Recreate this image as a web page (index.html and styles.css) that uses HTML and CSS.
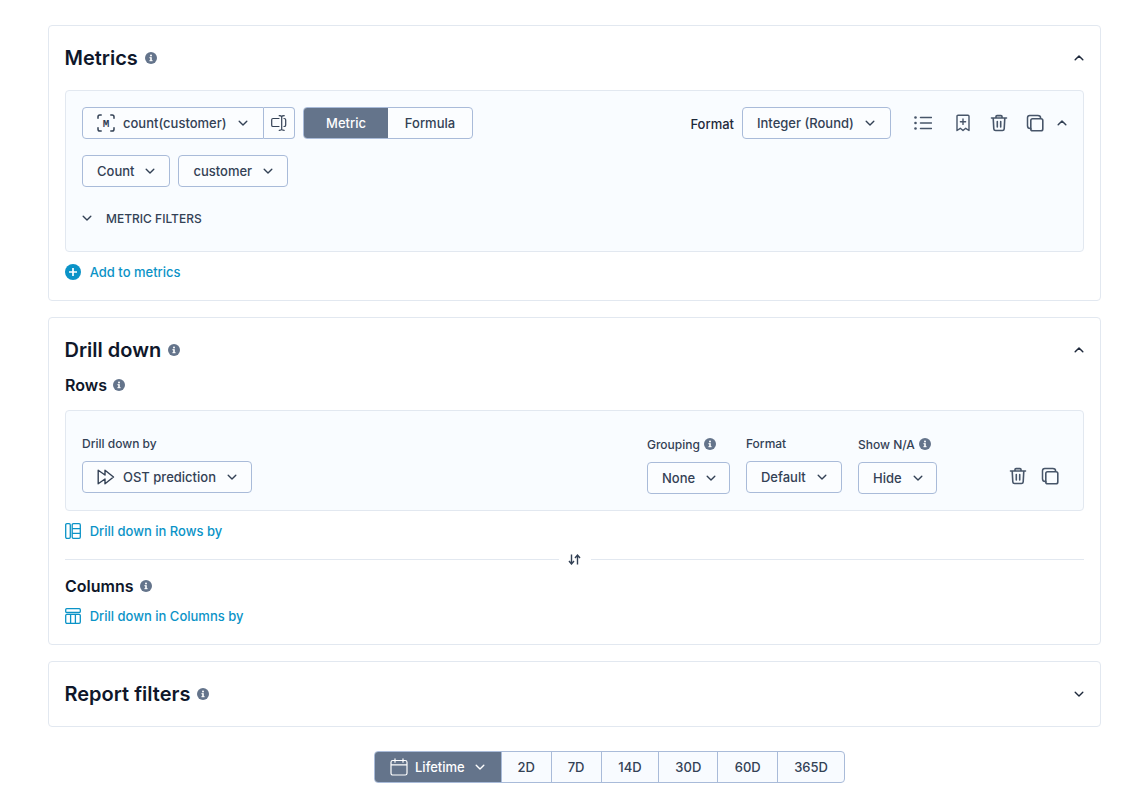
FILE: index.html
```html
<!DOCTYPE html>
<html lang="en">
<head>
    <meta charset="UTF-8">
    <title>Report builder</title>
    <link rel="stylesheet" href="styles.css">
</head>
<body>
    <svg class="sprite" width="0" height="0">
        <symbol id="info" viewBox="0 0 12 12">
            <circle cx="6" cy="6" r="6" fill="#64748b"/>
            <rect x="5.2" y="5.2" width="1.6" height="3.8" fill="#fff"/>
            <rect x="4.4" y="5.2" width="1.4" height="1" fill="#fff"/>
            <rect x="4.4" y="8.2" width="3.2" height="1" fill="#fff"/>
            <circle cx="6" cy="3.5" r="1" fill="#fff"/>
        </symbol>
        <symbol id="chev-down" viewBox="0 0 12 12">
            <path d="M2.2 4.3 6 8l3.8-3.7" fill="none" stroke="currentColor" stroke-width="1.4" stroke-linecap="round" stroke-linejoin="round"/>
        </symbol>
        <symbol id="chev-up" viewBox="0 0 12 12">
            <path d="M2.2 7.7 6 4l3.8 3.7" fill="none" stroke="currentColor" stroke-width="1.5" stroke-linecap="round" stroke-linejoin="round"/>
        </symbol>
        <symbol id="trash" viewBox="0 0 18 18">
            <path d="M1.5 4h15M6 4V2.6c0-.6.4-1 1-1h4c.6 0 1 .4 1 1V4M3.2 4l.6 10.8c.1 1 .8 1.7 1.8 1.7h6.8c1 0 1.7-.7 1.8-1.7L14.8 4M7.3 7.5v5.5M10.700 7.500v5.500" fill="none" stroke="currentColor" stroke-width="1.6" stroke-linecap="round" stroke-linejoin="round"/>
        </symbol>
        <symbol id="copy" viewBox="0 0 18 18">
            <rect x="4.8" y="4.8" width="12" height="12" rx="1.8" fill="none" stroke="currentColor" stroke-width="1.6"/>
            <path d="M4.8 14.6h-.5c-1.6 0-2.8-1.2-2.8-2.8V3.8c0-1.3 1-2.3 2.3-2.3h8c1.6 0 2.8 1 2.8 2.4" fill="none" stroke="currentColor" stroke-width="1.5" stroke-linecap="round"/>
        </symbol>
    </svg>

    <!-- Metrics -->
    <section class="card">
        <div class="card-head">
            <h2>Metrics</h2>
            <svg class="info"><use href="#info"/></svg>
            <svg class="chev card-toggle"><use href="#chev-up"/></svg>
        </div>
        <div class="panel metric-panel">
            <div class="row row-top">
                <div class="joined">
                    <button class="btn name-btn">
                        <svg class="ico-m" viewBox="0 0 18 18" width="18" height="18">
                            <path d="M1 4.200V2.800C1 1.800 1.800 1 2.800 1h1.400M13.800 1h1.400c1 0 1.800.8 1.800 1.800v1.400M17 13.800v1.400c0 1-.8 1.800-1.800 1.800h-1.400M4.200 17H2.800C1.800 17 1 16.200 1 15.200v-1.400" fill="none" stroke="currentColor" stroke-width="1.500" stroke-linecap="round"/>
                            <text x="9" y="12.800" class="ico-letter">M</text>
                        </svg>
                        count(customer)
                        <svg class="chev"><use href="#chev-down"/></svg>
                    </button>
                    <button class="btn rename-btn">
                        <svg viewBox="0 0 16 16" width="16" height="16">
                            <path d="M8 3.500H2c-.8 0-1.300.5-1.300 1.300v5.400c0 .8.5 1.300 1.300 1.300h6M13 3.500c.9 0 1.700.5 1.700 1.300v5.400c0 .8-.8 1.300-1.700 1.300M10.700 1.500v13M8.200.7c1.300 0 2.200.2 2.500.8.300-.6 1.200-.8 2.500-.8M8.200 15.300c1.300 0 2.200-.2 2.500-.8.300.6 1.200.8 2.500.8" fill="none" stroke="currentColor" stroke-width="1.200" stroke-linecap="round"/>
                        </svg>
                    </button>
                </div>
                <div class="segment type-switch">
                    <span class="seg active">Metric</span>
                    <span class="seg">Formula</span>
                </div>
                <div class="metric-tools">
                    <span class="format-label">Format</span>
                    <button class="btn format-btn">Integer (Round)<svg class="chev"><use href="#chev-down"/></svg></button>
                    <svg class="tool list-ico" viewBox="0 0 18 18">
                        <path d="M6.500 3.500h11M6.500 9h11M6.500 14.500h11" fill="none" stroke="currentColor" stroke-width="1.500" stroke-linecap="round"/>
                        <circle cx="1.500" cy="3.500" r="1.300" fill="currentColor"/>
                        <circle cx="1.500" cy="9" r="1.300" fill="currentColor"/>
                        <circle cx="1.500" cy="14.500" r="1.300" fill="currentColor"/>
                    </svg>
                    <svg class="tool mark-ico" viewBox="0 0 16 18">
                        <path d="M2 2.300c0-.6.4-1 1-1h10c.6 0 1 .4 1 1v14.200l-3.300-2.200L8 16.500l-2.700-2.200L2 16.500zM8 5v5.400M5.400 7.700h5.200" fill="none" stroke="currentColor" stroke-width="1.400" stroke-linecap="round" stroke-linejoin="round"/>
                    </svg>
                    <svg class="tool trash-ico"><use href="#trash"/></svg>
                    <svg class="tool copy-ico"><use href="#copy"/></svg>
                    <svg class="chev tools-toggle"><use href="#chev-up"/></svg>
                </div>
            </div>
            <div class="row row-aggr">
                <button class="btn">Count<svg class="chev"><use href="#chev-down"/></svg></button>
                <button class="btn">customer<svg class="chev"><use href="#chev-down"/></svg></button>
            </div>
            <div class="filters-toggle">
                <svg class="chev"><use href="#chev-down"/></svg>
                <span>METRIC FILTERS</span>
            </div>
        </div>
        <a class="add-link metric-add" href="#">
            <svg viewBox="0 0 16 16" width="16" height="16">
                <circle cx="8" cy="8" r="8" fill="currentColor"/>
                <path d="M8 4v8M4 8h8" stroke="#fff" stroke-width="1.700"/>
            </svg>
            Add to metrics
        </a>
    </section>

    <!-- Drill down -->
    <section class="card">
        <div class="card-head drill-head">
            <h2>Drill down</h2>
            <svg class="info"><use href="#info"/></svg>
            <svg class="chev card-toggle"><use href="#chev-up"/></svg>
        </div>
        <div class="sub-head rows-head">
            <h3>Rows</h3>
            <svg class="info"><use href="#info"/></svg>
        </div>
        <div class="panel drill-panel">
            <div class="field drill-by">
                <label>Drill down by</label>
                <button class="btn ost-btn">
                    <svg viewBox="0 0 18 18" width="18" height="18">
                        <path d="M1.200 2.200 8 7V2.200L16.500 9 8 15.800V11l-6.800 4.800z" fill="none" stroke="currentColor" stroke-width="1.400" stroke-linejoin="round"/>
                    </svg>
                    OST prediction
                    <svg class="chev"><use href="#chev-down"/></svg>
                </button>
            </div>
            <div class="field field-low">
                <label>Grouping <svg class="info info-sm"><use href="#info"/></svg></label>
                <button class="btn none-btn">None<svg class="chev"><use href="#chev-down"/></svg></button>
            </div>
            <div class="field">
                <label>Format</label>
                <button class="btn default-btn">Default<svg class="chev"><use href="#chev-down"/></svg></button>
            </div>
            <div class="field field-low">
                <label>Show N/A <svg class="info info-sm"><use href="#info"/></svg></label>
                <button class="btn hide-btn">Hide<svg class="chev"><use href="#chev-down"/></svg></button>
            </div>
            <div class="drill-tools">
                <svg class="tool trash-ico"><use href="#trash"/></svg>
                <svg class="tool copy-ico"><use href="#copy"/></svg>
            </div>
        </div>
        <a class="add-link rows-add" href="#">
            <svg viewBox="0 0 16 16" width="16" height="16">
                <rect x=".7" y=".7" width="4.600" height="14.600" rx="1.200" fill="none" stroke="currentColor" stroke-width="1.300"/>
                <rect x="7.200" y=".7" width="8.100" height="14.600" rx="1.200" fill="none" stroke="currentColor" stroke-width="1.300"/>
                <path d="M7.200 5.600h8M7.200 10.400h8" stroke="currentColor" stroke-width="1.300"/>
            </svg>
            Drill down in Rows by
        </a>
        <div class="divider">
            <svg viewBox="0.5 -0.5 14 12" width="14" height="12">
                <path d="M4 1v9M1.500 7.500 4 10.500l2.500-3M10 11V2M7.500 4.500 10 1.500l2.500 3" fill="none" stroke="#334155" stroke-width="1.400"/>
            </svg>
        </div>
        <div class="sub-head cols-head">
            <h3>Columns</h3>
            <svg class="info"><use href="#info"/></svg>
        </div>
        <a class="add-link cols-add" href="#">
            <svg viewBox="0 0 16 16" width="16" height="16">
                <rect x=".7" y=".7" width="14.600" height="3.800" rx="1" fill="none" stroke="currentColor" stroke-width="1.300"/>
                <rect x=".7" y="6.300" width="14.600" height="9" rx="1.200" fill="none" stroke="currentColor" stroke-width="1.300"/>
                <path d="M5.600 6.300v9M10.400 6.300v9" stroke="currentColor" stroke-width="1.300"/>
            </svg>
            Drill down in Columns by
        </a>
    </section>

    <!-- Report filters -->
    <section class="card card-closed">
        <div class="card-head">
            <h2>Report filters</h2>
            <svg class="info"><use href="#info"/></svg>
            <svg class="chev card-toggle"><use href="#chev-down"/></svg>
        </div>
    </section>

    <div class="segment range">
        <span class="seg active">
            <svg viewBox="0 0 18 18" width="18" height="18">
                <path d="M5 .8v3.400M13 .8v3.400M1 6.800h16M2.800 2.500h12.400c1 0 1.800.8 1.800 1.800v10.900c0 1-.8 1.800-1.800 1.800H2.800c-1 0-1.800-.8-1.800-1.800V4.300c0-1 .8-1.800 1.800-1.800z" fill="none" stroke="currentColor" stroke-width="1.200" stroke-linecap="round"/>
            </svg>
            Lifetime
            <svg class="chev"><use href="#chev-down"/></svg>
        </span>
        <span class="seg seg-2d">2D</span>
        <span class="seg seg-7d">7D</span>
        <span class="seg seg-14d">14D</span>
        <span class="seg seg-30d">30D</span>
        <span class="seg seg-60d">60D</span>
        <span class="seg seg-365d">365D</span>
    </div>
</body>
</html>
```

FILE: styles.css
```css
* {
    box-sizing: border-box;
}

body {
    margin: 0;
    padding: 25px 26px 22px 48px;
    background-color: #fff;
    color: #0f172a;
    font-family: Inter, "Liberation Sans", sans-serif;
}

.sprite {
    position: absolute;
}

.card {
    border: 1px solid #e2e8f0;
    border-radius: 4px;
    padding: 0 16px;
    margin-bottom: 16px;
    height: 276px;
}

.card:nth-of-type(2) {
    height: 328px;
}

.card-closed {
    height: 66px;
    margin-bottom: 24px;
}

.card-head {
    display: flex;
    align-items: center;
    height: 64px;
    padding-bottom: 1px;
}

.drill-head {
    height: 65px;
    padding-bottom: 2px;
}

h2 {
    margin: 0 0 0 -.5px;
    font-size: 20px;
    line-height: 24px;
    font-weight: 600;
}

h3 {
    margin: 0;
    font-size: 16px;
    line-height: 20px;
    font-weight: 600;
}

.info {
    width: 12px;
    height: 12px;
    margin-left: 7px;
    flex: none;
}

.sub-head .info {
    margin-left: 6px;
}

.info-sm {
    margin-left: 4px;
}

.chev {
    width: 12px;
    height: 12px;
    flex: none;
    color: #334155;
}

.card-toggle {
    margin-left: auto;
    margin-right: -1px;
    color: #1e293b;
}

.panel {
    border: 1px solid #e2e8f0;
    border-radius: 4px;
    background-color: #f9fcff;
    padding: 16px;
}

.metric-panel {
    height: 162px;
}

.row {
    display: flex;
    align-items: center;
}

.row-aggr {
    gap: 8px;
    margin-top: 16px;
}

.btn {
    display: inline-flex;
    align-items: center;
    height: 32px;
    padding: 0 13px 0 14px;
    gap: 10px;
    border: 1px solid #a9bbd9;
    border-radius: 4px;
    background-color: #fbfdff;
    color: #334155;
    font-family: inherit;
    font-size: 13px;
    font-weight: 500;
    white-space: nowrap;
}

.joined {
    display: flex;
    width: 213px;
}

.name-btn {
    width: 182px;
    padding: 0 14px;
    border-radius: 4px 0 0 4px;
    gap: 0;
}

.name-btn .ico-m {
    flex: none;
    margin-right: 8px;
}

.ico-letter {
    fill: currentColor;
    font-family: "Liberation Mono", monospace;
    font-size: 11px;
    font-weight: 700;
    text-anchor: middle;
}

.name-btn .chev {
    margin-left: 10px;
}

.rename-btn {
    width: 31px;
    padding: 0 0 0 7px;
    border-left: 0;
    border-radius: 0 4px 4px 0;
}

.ost-btn {
    gap: 8px;
}

.ost-btn .chev {
    margin-left: 2px;
}

.none-btn {
    width: 83px;
}

.default-btn {
    width: 96px;
}

.hide-btn {
    width: 79px;
}

.none-btn .chev,
.default-btn .chev,
.hide-btn .chev {
    margin-left: auto;
}

.segment {
    display: flex;
    border: 1px solid #a9bbd9;
    border-radius: 4px;
    background-color: #fbfdff;
    font-size: 13px;
    font-weight: 500;
    color: #334155;
    overflow: hidden;
}

.seg {
    display: flex;
    align-items: center;
    justify-content: center;
    height: 30px;
}

.seg.active {
    background-color: #64748b;
    color: #fff;
}

.type-switch {
    margin-left: 8px;
    width: 170px;
}

.type-switch .seg {
    width: 85px;
}

.metric-tools {
    display: flex;
    align-items: center;
    margin-left: auto;
}

.format-label {
    font-size: 13px;
    font-weight: 500;
    color: #1e293b;
    margin-right: 8px;
    padding-top: 1px;
}

.format-btn {
    width: 149px;
    margin-right: 23px;
}

.tool {
    color: #475569;
    flex: none;
}

.list-ico {
    width: 18px;
    height: 18px;
    margin-right: 23px;
}

.mark-ico {
    width: 16px;
    height: 18px;
    margin-right: 19px;
}

.trash-ico {
    width: 18px;
    height: 18px;
}

.copy-ico {
    width: 18px;
    height: 18px;
    margin-left: 18px;
}

.tools-toggle {
    margin-left: 12px;
    margin-right: -1px;
}

.filters-toggle {
    display: flex;
    align-items: center;
    margin-top: 24px;
    height: 14px;
    font-size: 12px;
    font-weight: 500;
    color: #334155;
}

.filters-toggle .chev {
    margin-left: -1px;
}

.filters-toggle span {
    margin-left: 13px;
}

.add-link {
    display: flex;
    align-items: center;
    gap: 8.700px;
    height: 16px;
    color: #0b93c7;
    font-size: 13px;
    font-weight: 500;
    text-decoration: none;
}

.metric-add {
    margin-top: 12px;
}

.sub-head {
    display: flex;
    align-items: center;
    height: 20px;
}

.rows-head {
    margin-top: -8px;
}

.drill-panel {
    display: flex;
    align-items: flex-start;
    height: 101px;
    margin-top: 15px;
    padding-top: 24px;
}

.field {
    display: flex;
    flex-direction: column;
    margin-right: 16px;
}

.field label {
    display: flex;
    align-items: center;
    height: 16px;
    margin-bottom: 10px;
    font-size: 12px;
    font-weight: 500;
    color: #334155;
}

.field-low {
    padding-top: 1px;
}

.drill-by {
    margin-right: 395px;
}

.drill-tools {
    display: flex;
    margin-left: auto;
    margin-top: 32px;
    margin-right: 8px;
}

.drill-tools .copy-ico {
    margin-left: 14px;
}

.rows-add {
    margin-top: 12px;
}

.divider {
    display: flex;
    align-items: center;
    justify-content: center;
    margin-top: 12px;
    height: 16px;
    background: linear-gradient(#e2e8f0, #e2e8f0) center / 100% 1px no-repeat;
}

.divider svg {
    box-sizing: content-box;
    padding: 0 9px;
    background-color: #fff;
}

.cols-head {
    margin-top: 9px;
}

.cols-add {
    margin-top: 12px;
}

.range {
    width: 471px;
    height: 32px;
    margin-left: 326px;
    font-size: 13px;
    font-weight: 500;
    background-color: #f8fbff;
}

.range .seg {
    border-left: 1px solid #a9bbd9;
}

.range .seg.active {
    border-left: 0;
    width: 126px;
    gap: 7px;
    color: #fff;
}

.range .seg.active .chev {
    color: #fff;
    margin-left: 2px;
}

.seg-2d,
.seg-7d {
    width: 50px;
}

.seg-14d {
    width: 58px;
}

.seg-30d {
    width: 59px;
}

.seg-60d {
    width: 60px;
}

.seg-365d {
    width: 67px;
}
```
